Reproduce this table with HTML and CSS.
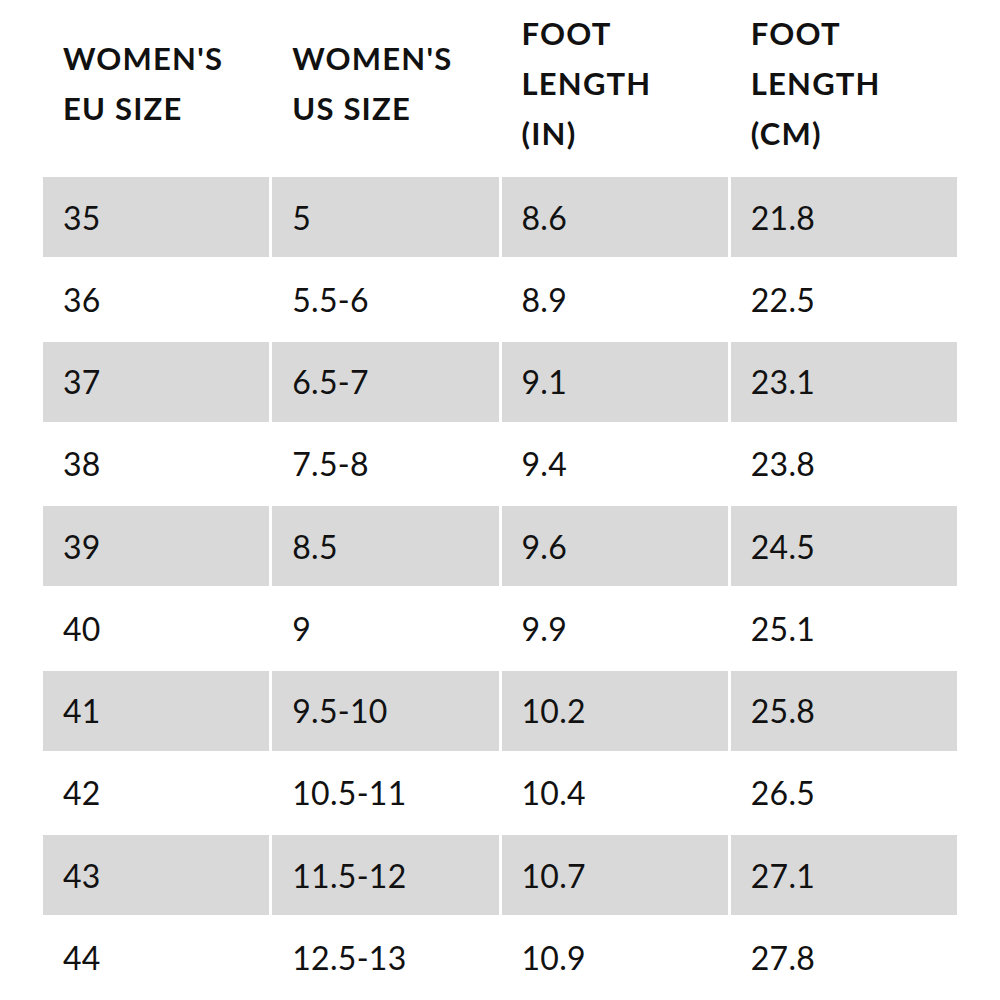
FILE: index.html
```html
<!DOCTYPE html>
<html>
<head>
<meta charset="utf-8">
<link rel="stylesheet" href="styles.css">
</head>
<body>
<div class="chart">
  <div class="head">
    <div class="hcell">WOMEN'S<br>EU SIZE</div>
    <div class="hcell">WOMEN'S<br>US SIZE</div>
    <div class="hcell">FOOT<br>LENGTH<br>(IN)</div>
    <div class="hcell">FOOT<br>LENGTH<br>(CM)</div>
  </div>
  <div class="body">
    <div class="row shade"><div class="cell">35</div><div class="cell">5</div><div class="cell">8.6</div><div class="cell">21.8</div></div>
    <div class="row"><div class="cell">36</div><div class="cell">5.5-6</div><div class="cell">8.9</div><div class="cell">22.5</div></div>
    <div class="row shade"><div class="cell">37</div><div class="cell">6.5-7</div><div class="cell">9.1</div><div class="cell">23.1</div></div>
    <div class="row"><div class="cell">38</div><div class="cell">7.5-8</div><div class="cell">9.4</div><div class="cell">23.8</div></div>
    <div class="row shade"><div class="cell">39</div><div class="cell">8.5</div><div class="cell">9.6</div><div class="cell">24.5</div></div>
    <div class="row"><div class="cell">40</div><div class="cell">9</div><div class="cell">9.9</div><div class="cell">25.1</div></div>
    <div class="row shade"><div class="cell">41</div><div class="cell">9.5-10</div><div class="cell">10.2</div><div class="cell">25.8</div></div>
    <div class="row"><div class="cell">42</div><div class="cell">10.5-11</div><div class="cell">10.4</div><div class="cell">26.5</div></div>
    <div class="row shade"><div class="cell">43</div><div class="cell">11.5-12</div><div class="cell">10.7</div><div class="cell">27.1</div></div>
    <div class="row"><div class="cell">44</div><div class="cell">12.5-13</div><div class="cell">10.9</div><div class="cell">27.8</div></div>
  </div>
</div>
</body>
</html>
```
FILE: styles.css
```css
html, body {
  margin: 0;
  padding: 0;
  background: #ffffff;
}
body {
  font-family: "Lato", "Noto Sans", sans-serif;
  color: #111111;
}
.chart {
  width: 914px;
  margin-left: 43px;
}
.head {
  display: grid;
  grid-template-columns: repeat(4, 1fr);
  column-gap: 3px;
  height: 165px;
  align-items: center;
  margin-bottom: 12px;
}
.hcell {
  padding-left: 20px;
  font-size: 31px;
  font-weight: 700;
  line-height: 50px;
  letter-spacing: 1.2px;
}
.body {
  display: flex;
  flex-direction: column;
  row-gap: 2.25px;
}
.row {
  display: grid;
  grid-template-columns: repeat(4, 1fr);
  column-gap: 3px;
  height: 80px;
}
.cell {
  display: flex;
  align-items: center;
  padding-left: 20px;
  font-size: 32px;
  font-weight: 400;
  letter-spacing: 0.3px;
}
.row.shade .cell {
  background: #d9d9d9;
}
```
